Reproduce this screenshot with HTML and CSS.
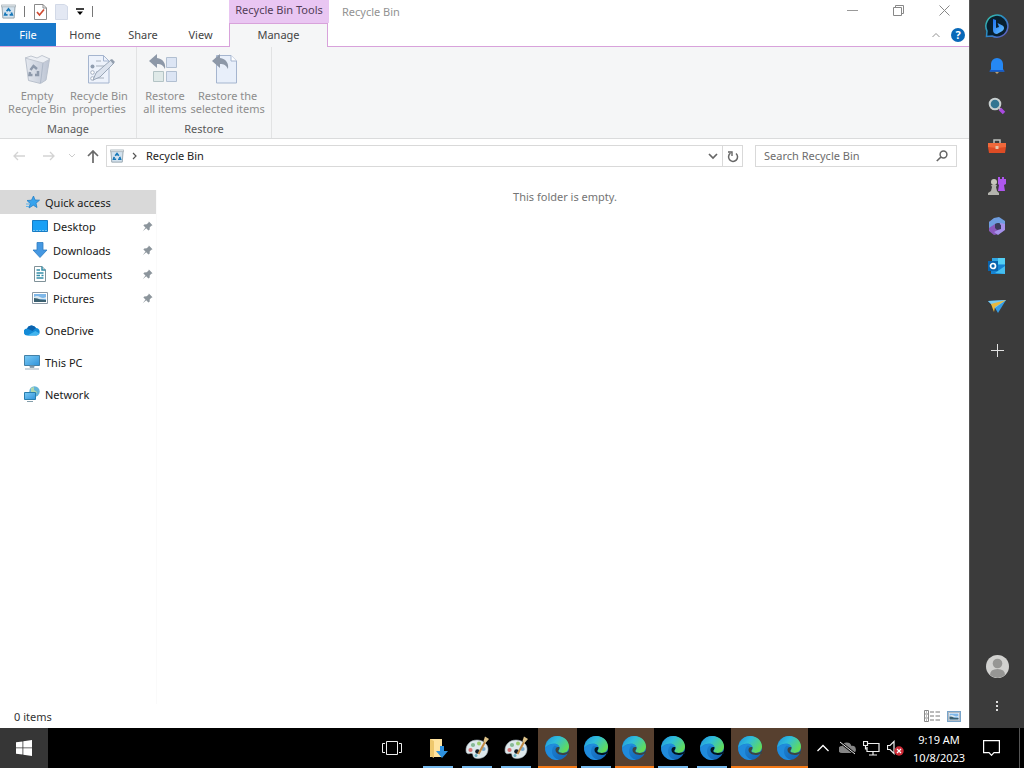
FILE: index.html
```html
<!DOCTYPE html>
<html lang="en">
<head>
<meta charset="utf-8">
<meta name="viewport" content="width=device-width, initial-scale=1">
<title>Recycle Bin</title>
<link rel="stylesheet" href="styles.css">
</head>
<body>
<svg class="defs" width="0" height="0" aria-hidden="true">
  <defs>
    <linearGradient id="edge-top" x1="0" y1="0" x2="1" y2="0.6"><stop offset="0" stop-color="#2191d8"/><stop offset=".45" stop-color="#2fbddc"/><stop offset="1" stop-color="#62dc58"/></linearGradient>
    <linearGradient id="edge-low" x1="0" y1="0" x2="1" y2="1"><stop offset="0" stop-color="#2193de"/><stop offset="1" stop-color="#1260b4"/></linearGradient>
    <linearGradient id="blue" x1="0" y1="0" x2="1" y2="1"><stop offset="0" stop-color="#7ccbf5"/><stop offset="1" stop-color="#2f93da"/></linearGradient>
    <linearGradient id="bing-ring" x1="0" y1="0" x2="1" y2="1"><stop offset="0" stop-color="#39c6a6"/><stop offset=".5" stop-color="#2a86c9"/><stop offset="1" stop-color="#6a58c0"/></linearGradient>
    <linearGradient id="bing-b" x1="0" y1="0" x2="1" y2="1"><stop offset="0" stop-color="#1d70ef"/><stop offset="1" stop-color="#67c4ff"/></linearGradient>
    <linearGradient id="bin-body" x1="0" y1="0" x2="1" y2="0"><stop offset="0" stop-color="#e4e8ef"/><stop offset="1" stop-color="#bcc4d3"/></linearGradient>
  </defs>
  <symbol id="bin" viewBox="0 0 16 16">
    <path d="M1 2h14l-1 13H2z" fill="#d3e2ee" stroke="#94a1a9"/>
    <path d="M.5 1h15v2H.5z" fill="#e6ecef" stroke="#9ca8b0" stroke-width=".7"/>
    <path d="M6 7.800 8 5.300l2 2.500M11 9l1 2.700H9.200M4.800 9 4 11.700h3" fill="none" stroke="#1677b8" stroke-width="1.900"/>
  </symbol>
  <symbol id="edge" viewBox="0 0 24 24">
    <circle cx="12" cy="12" r="12" fill="url(#edge-low)"/>
    <path d="M.4 11.500C1.200 4.800 6 0 12.200 0 19.500 0 24 5.300 24 10.600c0 3.800-2.700 6.400-6.200 6.400-2.800 0-4.300-1.100-4.300-2 0-.8 1.100-1 1.100-3 0-2.200-2.300-4.300-5.600-4.300-4 0-6.900 1.600-8.600 3.800z" fill="url(#edge-top)"/>
    <path d="M9.700 9.500c-1.500 1.200-2.700 3.200-2.700 5.700 0 4 2.800 7.600 7.200 8.600C7 25.300 1.200 20 .4 13.500 1.500 10 5.800 7.800 9 7.800c3.300 0 5.500 2 5.500 4.200z" fill="#208bdc"/>
    <path d="M14.500 11.300c-2-1.200-4 .4-4 2.500 0 3.200 3.500 5.200 7.100 5.200 1.800 0 3.300-.6 4.700-1.300l1.700.300v-3.200c-1.500 1.500-3.300 2.200-6.100 2.200-3 0-4.700-1-4.700-2 0-.8 1.300-1.200 1.300-3.700z" fill="var(--cut)"/>
  </symbol>
  <symbol id="palette" viewBox="0 0 24 24">
    <path d="M12 4C5 4 1 9 1 14c0 4 2 4 4 3.500 2-.5 3 .5 3 2 0 2 2 3 5 3 6 0 10-4 10-9.500C23 8 18 4 12 4z" fill="#dde8ec" stroke="#a7b6bd" stroke-width=".6"/>
    <circle cx="5.500" cy="14" r="2.100" fill="#d87474"/><circle cx="8" cy="9" r="2.100" fill="#86b997"/><circle cx="14" cy="7.500" r="2" fill="#9ccb6d"/><circle cx="18.500" cy="13" r="2.100" fill="#78a9cf"/><circle cx="12.500" cy="15.500" r="2.300" fill="#111c26"/><circle cx="11" cy="19.500" r="1.500" fill="#67adbd"/>
    <path d="m13.500 18 7-13" stroke="#c18a45" stroke-width="2"/><path d="m18.500 5 1.500-4.500L24 3l-3.500 4z" fill="#dec389"/>
  </symbol>
  <symbol id="pin" viewBox="0 0 12 12">
    <path d="m7.500.5 4 4-1.200.6-1.800 1.800-.2 2.600-1.300.8-2.400-2.400L.8 11.200l3-4.200-2.300-2.100.9-1.200 2.700-.1L7 1.800z" fill="#8c959c"/>
  </symbol>
  <symbol id="picture" viewBox="0 0 16 12">
    <path d="M.5.5h15v11H.5z" fill="#fff" stroke="#8a98a5"/><path d="M2 2h12v8H2z" fill="#7eb7e9"/><path d="M2 5q3-2 6 0t6 0v2H2z" fill="#dbe9f1"/><path d="M2 6q4 0 6 1.500L14 8v2H2z" fill="#3b6070"/>
  </symbol>
</svg>

<div class="screen">
  <div class="workspace">
    <main class="explorer">
      <header class="titlebar">
        <div class="quick">
          <svg width="15" height="15"><use href="#bin"/></svg>
          <span class="rule"></span>
          <button class="plain" aria-label="Properties"><svg width="13" height="16" viewBox="0 0 13 16"><path d="M.5.500h8.500l3.500 3.500v11.500H.5z" fill="#fff" stroke="#8a8a8a"/><path d="M9 .5V4h3.500" fill="none" stroke="#8a8a8a"/><path d="m3 8 2.500 3L10 5.500" fill="none" stroke="#cf4a31" stroke-width="1.700"/></svg></button>
          <button class="plain" aria-label="New folder"><svg width="13" height="16" viewBox="0 0 13 16"><path d="M.5.5h9l3 2v13H.5z" fill="#e3e8f3" stroke="#d2d9e7"/></svg></button>
          <button class="plain" aria-label="Customize Quick Access Toolbar"><svg width="8" height="8" viewBox="0 0 8 8"><path d="M0 1h8" stroke="#000" stroke-width="1.500"/><path d="M1 3.500h6l-3 3.500z"/></svg></button>
          <span class="rule"></span>
        </div>
        <div class="tools">Recycle Bin Tools</div>
        <h1 class="title">Recycle Bin</h1>
        <div class="window-buttons">
          <button class="plain" aria-label="Minimize"><svg width="11" height="11" viewBox="0 0 11 11"><path d="M0 5.500h11" stroke="#999"/></svg></button>
          <button class="plain" aria-label="Restore"><svg width="11" height="11" viewBox="0 0 11 11"><path d="M.5 2.500h8v8h-8zM2.500 2.500v-2h8v8h-2" fill="none" stroke="#888"/></svg></button>
          <button class="plain" aria-label="Close"><svg width="11" height="11" viewBox="0 0 11 11"><path d="m.5.500 10 10m0-10-10 10" stroke="#888"/></svg></button>
        </div>
      </header>
      <nav class="tabs" aria-label="Ribbon tabs">
        <button class="tab file">File</button>
        <button class="tab">Home</button>
        <button class="tab">Share</button>
        <button class="tab">View</button>
        <button class="tab current">Manage</button>
        <div class="tab-end">
          <button class="plain" aria-label="Minimize the Ribbon"><svg width="8" height="6" viewBox="0 0 8 6"><path d="m.5 5 3.500-3.500L7.500 5" fill="none" stroke="#929292"/></svg></button>
          <button class="help" aria-label="Help">?</button>
        </div>
      </nav>
      <section class="ribbon" aria-label="Manage">
        <div class="group manage">
          <div class="commands">
            <button class="command" disabled><svg width="32" height="32" viewBox="0 0 32 32"><path d="m4.500 5 3 22.500 12 3 5.500-3.500L28.500 6z" fill="url(#bin-body)" stroke="#b9c1cd"/><path d="m4 5 6-2 6 2 5-2.500L29 6l-7 4z" fill="#eceff4" stroke="#c1c7d1"/><path d="m22 10-2.500 20" stroke="#aeb8c8"/><path d="m9.500 17 3-4 3.500 3m1 2v4h-3m-2.500 0h-3l.5-3" fill="none" stroke="#8d99ab" stroke-width="2.500"/></svg><span>Empty<br>Recycle Bin</span></button>
            <button class="command" disabled><svg width="32" height="32" viewBox="0 0 32 32"><path d="M5.500 2.500h15L26 8v22H5.500z" fill="#edf2fb" stroke="#a5b5cf"/><path d="M20.500 2.500V8H26" fill="none" stroke="#a5b5cf"/><path d="M13 8h5m-5 5h9m-9 6h9m-9 6h8" stroke="#a7b0bc"/><circle cx="9.500" cy="13.500" r="2" fill="#909daf"/><circle cx="9.500" cy="19.500" r="1.800" fill="#fff" stroke="#a5b0c1"/><circle cx="9.500" cy="25.500" r="1.800" fill="#fff" stroke="#a5b0c1"/><path d="m10 27 3-7L28 7l3 3-14 14z" fill="#dce3ee" stroke="#9aa7b8"/><path d="m27 7 2-1 3 3-2 2z" fill="#929ead"/></svg><span>Recycle Bin<br>properties</span></button>
          </div>
          <div class="group-name">Manage</div>
        </div>
        <div class="group restore">
          <div class="commands">
            <button class="command" disabled><svg width="32" height="32" viewBox="0 0 32 32"><path d="M17.500 4.500h10v10h-10zM17.500 18.500h10v10h-10z" fill="#dce5f4" stroke="#b1bfd1"/><path d="M4.500 18.500h10v10h-10z" fill="#dfe9e8" stroke="#b3c3c5"/><path d="M0 8 8 1v4c6 1 9 5 8 11-2-4-4-5-8-5v4z" fill="#8d98a8"/></svg><span>Restore<br>all items</span></button>
            <button class="command" disabled><svg width="32" height="32" viewBox="0 0 32 32"><path d="M4.500 2.500H19L24.500 8v22h-20z" fill="#e8effa" stroke="#a5b5cf"/><path d="M19 2.500V8h5.500" fill="#fff" stroke="#a5b5cf"/><path d="M0 8 8 1v4c6 1 9 5 8 11-2-4-4-5-8-5v4z" fill="#8d98a8"/></svg><span>Restore the<br>selected items</span></button>
          </div>
          <div class="group-name">Restore</div>
        </div>
      </section>
      <div class="navigation">
        <button class="plain" aria-label="Back"><svg width="12" height="10" viewBox="0 0 12 10"><path d="M12 5H1m4-4L1 5l4 4" fill="none" stroke="#d3d3d3" stroke-width="1.300"/></svg></button>
        <button class="plain" aria-label="Forward"><svg width="12" height="10" viewBox="0 0 12 10"><path d="M0 5h11M7 1l4 4-4 4" fill="none" stroke="#d3d3d3" stroke-width="1.300"/></svg></button>
        <button class="plain recent" aria-label="Recent locations"><svg width="8" height="6" viewBox="0 0 8 6"><path d="m1 1 3 3 3-3" fill="none" stroke="#ccc"/></svg></button>
        <button class="plain up" aria-label="Up"><svg width="12" height="13" viewBox="0 0 12 13"><path d="M6 13V1M1 6l5-5 5 5" fill="none" stroke="#696969" stroke-width="1.700"/></svg></button>
        <div class="address">
          <svg width="14" height="14"><use href="#bin"/></svg>
          <svg width="5" height="8" viewBox="0 0 5 8"><path d="m1 1 3 3-3 3" fill="none" stroke="#555" stroke-width="1.200"/></svg>
          <span>Recycle Bin</span>
          <button class="plain history" aria-label="Previous locations"><svg width="10" height="7" viewBox="0 0 10 7"><path d="m1 1 4 4 4-4" fill="none" stroke="#666" stroke-width="1.700"/></svg></button>
          <button class="refresh" aria-label="Refresh"><svg width="12" height="13" viewBox="0 0 12 13"><path d="M3.500 3.200A4.500 4.500 0 1 0 9 3.500" fill="none" stroke="#666" stroke-width="1.500"/><path d="M1 2h4v4" fill="none" stroke="#666" stroke-width="1.400"/></svg></button>
        </div>
        <label class="search"><input type="search" placeholder="Search Recycle Bin" aria-label="Search Recycle Bin"><svg width="12" height="12" viewBox="0 0 12 12"><circle cx="7.500" cy="4.500" r="3.400" fill="none" stroke="#666" stroke-width="1.500"/><path d="M5 7 .8 11" stroke="#666" stroke-width="1.700"/></svg></label>
      </div>
      <div class="content">
        <nav class="tree" aria-label="Folders">
          <a href="#" class="root selected"><svg width="16" height="16" viewBox="0 0 16 16"><path d="m9.500 2 1.500 4 4.500.2-3.500 3 1 4.300-3.700-2.300L5 14l1.200-4.500L3 6.500l4.500-.3z" fill="#38a3ed" stroke="#237fc7" stroke-width=".8"/><path d="M2 10h3m-3 2.500h3" stroke="#60b4e9"/></svg><span>Quick access</span></a>
          <a href="#"><svg width="16" height="16" viewBox="0 0 16 16"><path d="M.5 2.500h15v11H.5z" fill="#1aa0f5" stroke="#177bc3"/><path d="M1 12.500h14" stroke="#76c4f2" stroke-dasharray="2 1"/></svg><span>Desktop</span><svg class="pin" width="11" height="11"><use href="#pin"/></svg></a>
          <a href="#"><svg width="16" height="16" viewBox="0 0 16 16"><path d="M5 .5h6V8h4l-7 7.500L1 8h4z" fill="#4598e2" stroke="#2d7cc0" stroke-width=".8"/></svg><span>Downloads</span><svg class="pin" width="11" height="11"><use href="#pin"/></svg></a>
          <a href="#"><svg width="16" height="16" viewBox="0 0 16 16"><path d="M2.500.500H10L13.500 4v11.500h-11z" fill="#fff" stroke="#809299"/><path d="M10 .5V4h3.500M4.500 4H8M4.500 7h7M4.500 9.500H8m1.500 0h2M4.500 12h7" fill="none" stroke="#348da8" stroke-width="1.500"/></svg><span>Documents</span><svg class="pin" width="11" height="11"><use href="#pin"/></svg></a>
          <a href="#"><svg width="16" height="12"><use href="#picture"/></svg><span>Pictures</span><svg class="pin" width="11" height="11"><use href="#pin"/></svg></a>
          <a href="#" class="root spaced"><svg width="16" height="16" viewBox="0 0 16 16"><path d="M3.500 13.500a3.500 3.500 0 0 1-.5-7A5 5 0 0 1 12 6a3.800 3.800 0 0 1 .7 7.500z" fill="#138bd7"/><path d="M3 6.500A5 5 0 0 1 12 6L8.500 9z" fill="#0b62ae"/><path d="m3.500 13.500 8-4.500 4 2.500-2.800 2z" fill="#42b5ef"/></svg><span>OneDrive</span></a>
          <a href="#" class="root spaced"><svg width="16" height="16" viewBox="0 0 16 16"><path d="M.5 1.500h15v10H.5z" fill="url(#blue)" stroke="#4381a7"/><path d="M6 12h4v1.500H6zM1 15h14" fill="#7b95a5" stroke="#829aa9" stroke-width=".8"/></svg><span>This PC</span></a>
          <a href="#" class="root spaced"><svg width="16" height="16" viewBox="0 0 16 16"><circle cx="10.500" cy="5.500" r="5.200" fill="#65b5d8"/><path d="m7 2 3-1v3l3 2-2 3-4-3z" fill="#b2d8ac"/><path d="M.5 6.500h11v7H.5z" fill="url(#blue)" stroke="#297ead"/><path d="M3 15.500h6" stroke="#849eaa"/></svg><span>Network</span></a>
        </nav>
        <section class="files"><p>This folder is empty.</p></section>
      </div>
      <footer class="status">
        <span>0 items</span>
        <button class="plain" aria-label="Details view"><svg width="16" height="12" viewBox="0 0 16 12"><path d="M.5.500h4v11h-4zM.5 4h4m-4 4h4" fill="none" stroke="#888"/><path d="M6 2h4m1.500 0H16M6 6h4m1.500 0H16M6 10h4m1.500 0H16" stroke="#777"/><path d="M2 2h1m-1 4h1m-1 4h1" stroke="#777"/></svg></button>
        <button class="plain large" aria-label="Large icons view"><svg width="12" height="9" viewBox="0 0 16 12" preserveAspectRatio="none"><use href="#picture"/></svg></button>
      </footer>
    </main>
    <aside class="sidebar" aria-label="Browser sidebar">
      <button class="side" aria-label="Bing"><svg width="24" height="24" viewBox="0 0 24 24"><path d="M1.500 22.500 2 17a11 11 0 1 1 5 5z" fill="#09202e" stroke="url(#bing-ring)" stroke-width="1.500"/><path d="m8 5 3 1v8l3-1-1.500-4 5 2.500c3 2 1 5-1 6L12 20q-4 0-4-4z" fill="url(#bing-b)"/></svg></button>
      <button class="side" aria-label="Notifications"><svg width="18" height="18" viewBox="0 0 18 18"><path d="M3 12V7a6 6 0 0 1 12 0v5l1.500 2.500h-15z" fill="#2588f4"/><path d="M2 13h14l.5 1.500h-15z" fill="#145bcc"/><path d="M7 15h4l-2 2z" fill="#bba176"/></svg></button>
      <button class="side" aria-label="Search"><svg width="18" height="18" viewBox="0 0 18 18"><circle cx="7" cy="7" r="5.300" fill="#337591" stroke="#c9d0d0" stroke-width="2"/><path d="m10.500 10.500 2 2" stroke="#bbb" stroke-width="2"/><path d="m12 12 4 4" stroke="#a94bdf" stroke-width="3.500"/></svg></button>
      <button class="side" aria-label="Shopping tools"><svg width="18" height="18" viewBox="0 0 18 18"><path d="M6 7V3h6v4" fill="none" stroke="#bec1bd" stroke-width="1.500"/><path d="M0 6h18v4l-1 6H1l-1-6z" fill="#dd4c25"/><path d="M0 6h18v4l-9 1-9-1z" fill="#f0693b"/><path d="M7.500 9h3v3h-3z" fill="#e5c6ad"/></svg></button>
      <button class="side" aria-label="Games"><svg width="18" height="18" viewBox="0 0 18 18"><path d="M10 0h2v2h2V0h2v2h2v5l-2 1 1 6h-7l1-6-1-1z" fill="#ae57ed"/><circle cx="6" cy="5" r="3" fill="#c7c7bd"/><path d="M3 8h6L8 10l1 4 2 2v2H0v-2l3-2 1-4z" fill="#b4b4ae"/></svg></button>
      <button class="side" aria-label="Microsoft 365"><svg width="18" height="18" viewBox="0 0 18 18"><path d="M1 5 7 1v9l6 3-3 4-4 1-5-4z" fill="#8a59bd"/><path d="m6 1 5-1 6 4v6l-6-4-4 1-6 4V5z" fill="#6f9ee0"/><path d="m17 7v6l-7 5-4-3 6-3V6z" fill="#a591eb"/><path d="m7 7 3-1 3 2v4l-4 1-2-2z" fill="#3c3b5b"/></svg></button>
      <button class="side" aria-label="Outlook"><svg width="18" height="18" viewBox="0 0 18 18"><path d="M4 1h13v9H4z" fill="#31a7e4"/><path d="M10 1h7v6h-7z" fill="#53d0f6"/><path d="M3 8h14v9H3z" fill="#1683d2"/><path d="m7 16 10-7v8z" fill="#45bef0"/><path d="M0 4h10v10H0z" fill="#0864ae"/><circle cx="5" cy="9" r="2.500" fill="none" stroke="#fff" stroke-width="1.700"/></svg></button>
      <button class="side" aria-label="Drop"><svg width="18" height="18" viewBox="0 0 18 18"><path d="M0 4 18 3l-8 13-3-5z" fill="#359be3"/><path d="M0 4 18 3 7 11z" fill="#7bcbf2"/><path d="m3 7 15-4L7 10l-1 5z" fill="#e8b83d"/></svg></button>
      <button class="side add" aria-label="Customize sidebar"><svg width="13" height="13" viewBox="0 0 13 13"><path d="M0 6.500h13M6.500 0v13" stroke="#e2e2e2"/></svg></button>
      <button class="side account" aria-label="Account"><svg width="23" height="23" viewBox="0 0 23 23"><circle cx="11.500" cy="11.500" r="11.500" fill="#d1d1cf"/><circle cx="11.500" cy="8.500" r="4.800" fill="#969694"/><path d="M4 20q0-6 7.500-6t7.500 6q-7 6-15 0z" fill="#969694"/></svg></button>
      <button class="side" aria-label="More"><svg width="4" height="12" viewBox="0 0 4 12"><path d="M1 1h2v2H1zm0 4h2v2H1zm0 4h2v2H1z" fill="#ddd"/></svg></button>
    </aside>
  </div>
  <footer class="taskbar">
    <button class="start" aria-label="Start"><svg width="16" height="16" viewBox="0 0 16 16"><path d="m0 2.300 6.500-.9v6H0zm7.300-1L16 0v7.400H7.300zM0 8.300h6.500v6.200L0 13.700zm7.300 0H16V16l-8.700-1.300z" fill="#fff"/></svg></button>
    <button class="task-view" aria-label="Task View"><svg width="20" height="14" viewBox="0 0 20 14"><path d="M4.500.500h11v13h-11zM3 2.500H.5v9H3m14-9h2.500v9H17" fill="none" stroke="#eee"/></svg></button>
    <div class="apps">
      <button class="app" aria-label="Downloads folder"><svg width="20" height="22" viewBox="0 0 20 22"><path d="M2 3h12v18H2z" fill="#ffe3a0"/><path d="m2 3 4 2v17l-4-2z" fill="#eec76d"/><path d="M12 10h4v5h4l-6 7-6-7h4z" fill="#2e91df"/></svg></button>
      <button class="app" aria-label="Paint"><svg width="24" height="24"><use href="#palette"/></svg></button>
      <button class="app" aria-label="Paint, second window"><svg width="24" height="24"><use href="#palette"/></svg></button>
    </div>
    <div class="apps browsers">
      <button class="app alert" aria-label="Edge window 1"><svg width="24" height="24"><use href="#edge"/></svg></button>
      <button class="app" aria-label="Edge window 2"><svg width="24" height="24"><use href="#edge"/></svg></button>
      <button class="app alert" aria-label="Edge window 3"><svg width="24" height="24"><use href="#edge"/></svg></button>
      <button class="app" aria-label="Edge window 4"><svg width="24" height="24"><use href="#edge"/></svg></button>
      <button class="app" aria-label="Edge window 5"><svg width="24" height="24"><use href="#edge"/></svg></button>
      <button class="app alert" aria-label="Edge window 6"><svg width="24" height="24"><use href="#edge"/></svg></button>
      <button class="app alert" aria-label="Edge window 7"><svg width="24" height="24"><use href="#edge"/></svg></button>
    </div>
    <div class="tray">
      <button class="tray-icon" aria-label="Show hidden icons"><svg width="12" height="8" viewBox="0 0 12 8"><path d="m.5 7 5.500-5.500L11.500 7" fill="none" stroke="#fff" stroke-width="1.300"/></svg></button>
      <button class="tray-icon" aria-label="OneDrive status"><svg width="17" height="14" viewBox="0 0 17 14"><path d="M3 12a3.500 3.500 0 0 1 0-7 5 5 0 0 1 9.500 0 3.500 3.500 0 0 1 1.500 7z" fill="#858585"/><path d="m1 1 15 12" stroke="#000" stroke-width="2.500"/><path d="m1 1 15 12" stroke="#eee"/></svg></button>
      <button class="tray-icon" aria-label="Network"><svg width="17" height="15" viewBox="0 0 17 15"><path d="M5 2.500h11v8H4V6m6 5v3m-4 0h8M.5.500h4v4h-4zM2.500 5v3H4" fill="none" stroke="#eee" stroke-width="1.200"/></svg></button>
      <button class="tray-icon" aria-label="Volume muted"><svg width="17" height="16" viewBox="0 0 17 16"><path d="M.5 5.500H3l4-4v12l-4-4H.5z" fill="none" stroke="#eee" stroke-width="1.200"/><circle cx="12" cy="11" r="4.700" fill="#ce2a36"/><path d="m10 9 4 4m0-4-4 4" stroke="#fff" stroke-width="1.200"/></svg></button>
      <button class="clock"><span>9:19 AM</span><span>10/8/2023</span></button>
      <button class="notifications" aria-label="Notifications"><svg width="17" height="16" viewBox="0 0 17 16"><path d="M.600.600h15.800v12H11l-2.500 2.700L6 12.600H.6z" fill="none" stroke="#fff" stroke-width="1.200"/></svg></button>
      <button class="show-desktop" aria-label="Show desktop"></button>
    </div>
  </footer>
</div>
</body>
</html>
```
FILE: styles.css
```css
* { box-sizing: border-box; }
body { margin: 0; font: 11px/13px "Noto Sans", "Open Sans", sans-serif; color: #191919; background: #fff; }
button, input { font: inherit; color: inherit; }
button { padding: 0; border: 0; background: none; }
svg { display: block; flex: none; }
a { color: inherit; text-decoration: none; }
.defs { position: absolute; }
.screen { display: flex; flex-direction: column; min-height: 100vh; }
.workspace { display: flex; flex: 1; }
.explorer { display: flex; flex-direction: column; flex: 1; min-width: 0; }
.plain { display: flex; align-items: center; justify-content: center; }

.titlebar { display: flex; height: 23px; }
.quick { display: flex; align-items: center; width: 229px; padding-left: 1px; gap: 8px; }
.rule { width: 1px; height: 11px; margin-right: 1px; background: #777; }
.tools { width: 100px; padding-top: 3px; background: #e9c6f2; text-align: center; color: #513c56; }
.title { margin: 0; padding: 5px 0 0 13px; font: inherit; color: #929292; }
.window-buttons { display: flex; margin-left: auto; padding-right: 2px; }
.window-buttons button { width: 46px; height: 21px; }

.tabs { display: flex; height: 24px; border-bottom: 1px solid #d8a2db; }
.tab { width: 56px; height: 23px; color: #444; }
.tab:nth-child(2), .tab:nth-child(3) { width: 58px; }
.file { background: #1979ca; color: #fff; }
.current { width: 99px; height: 24px; padding-bottom: 2px; border: 1px solid #d8a2db; border-bottom: 0; background: #f5f6f7; }
.tab:nth-child(4) { width: 57px; }
.tab-end { display: flex; align-items: center; gap: 11px; margin-left: auto; padding-right: 4px; }
.help { width: 14px; height: 14px; border-radius: 50%; background: #0868b8; color: #fff; font-weight: 700; }

.ribbon { display: flex; height: 92px; background: #f5f6f7; border-bottom: 1px solid #dadbdc; }
.group { display: flex; flex-direction: column; padding-top: 6px; border-right: 1px solid #e2e3e4; }
.manage { width: 137px; }
.restore { width: 135px; }
.commands { display: flex; justify-content: center; gap: 4px; white-space: nowrap; }
.command { display: flex; flex-direction: column; align-items: center; gap: 4px; color: #8d8d8d; }
.group-name { margin-top: 7px; text-align: center; color: #5a5a5a; }

.navigation { display: flex; align-items: center; height: 34px; padding: 0 12px 0 13px; }
.navigation > .plain { width: 12px; margin-right: 18px; }
.navigation > .recent { width: 8px; margin: 0 11px 0 -5px; }
.navigation > .up { margin-right: 7px; }
.address { display: flex; align-items: center; gap: 8px; flex: 1; height: 22px; padding-left: 3px; border: 1px solid #d9d9d9; color: #222; }
.address span { padding: 0 0 2px 1px; }
.history { margin-left: auto; }
.refresh { display: grid; place-items: center; width: 20px; height: 20px; margin-left: -4px; border-left: 1px solid #d9d9d9; }
.search { display: flex; align-items: center; width: 202px; height: 22px; margin-left: 12px; padding: 0 8px; border: 1px solid #d9d9d9; }
.search input { flex: 1; min-width: 0; padding: 0 0 2px; border: 0; outline: 0; background: none; }
.search input::placeholder { color: #6d6d6d; opacity: 1; }

.content { display: flex; flex: 1; padding-top: 17px; }
.tree { width: 157px; border-right: 1px solid #fafafa; }
.tree a { display: flex; align-items: center; gap: 5px; height: 24px; padding: 0 3px 0 32px; }
.tree .root { padding-left: 24px; }
.tree .spaced { margin-top: 8px; }
.selected { background: #d9d9d9; }
.pin { margin-left: auto; }
.files { flex: 1; padding-left: 4px; }
.files p { margin: 0; color: #747474; text-align: center; }
.status { display: flex; align-items: center; height: 24px; padding: 0 8px 0 14px; color: #333; }
.status .plain:first-of-type { margin-left: auto; }
.large { margin-left: 7px; border: 1px solid #78a4ca; }

.sidebar { display: flex; flex-direction: column; width: 55px; padding: 6px 0 2px; background: #3b3b3b; border-left: 1px solid #555; }
.side { display: grid; place-items: center; height: 40px; }
.add { margin-top: 4px; }
.account { margin-top: auto; }

.taskbar { display: flex; height: 40px; background: #000; color: #fff; }
.start { display: grid; place-items: center; width: 48px; background: #363636; }
.task-view { display: grid; place-items: center; width: 40px; margin-left: auto; margin-right: 6px; }
.apps { display: flex; width: 117px; }
.browsers { width: 270px; margin-left: 3px; }
.app { --cut: #041521; display: flex; flex-direction: column; align-items: center; justify-content: space-between; flex: 1; padding-top: 8px; }
.app::after { content: ""; width: 30px; height: 2px; background: #76b9ed; }
.alert { --cut: #3d4442; background: #57402f; }
.alert::after { width: 100%; background: #f47916; }
.tray { display: flex; align-items: center; padding-left: 3px; }
.tray-icon { display: grid; place-items: center; width: 24px; height: 40px; }
.clock { display: flex; flex-direction: column; gap: 5px; width: 64px; align-items: center; }
.notifications { display: grid; place-items: center; width: 40px; height: 40px; }
.show-desktop { width: 5px; height: 40px; margin-left: 8px; border-left: 1px solid #555; }
```
